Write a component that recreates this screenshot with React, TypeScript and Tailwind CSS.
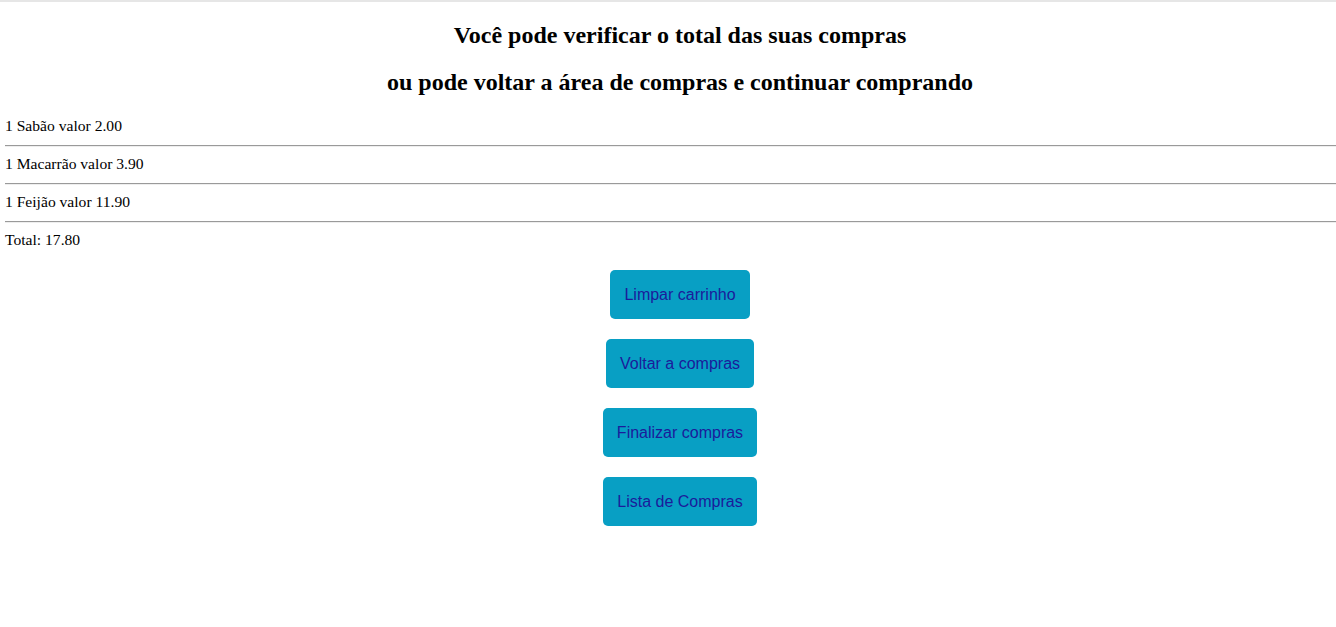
import React from "react";

const items = ["1 Sabão valor 2.00", "1 Macarrão valor 3.90", "1 Feijão valor 11.90"];
const buttons = ["Limpar carrinho", "Voltar a compras", "Finalizar compras", "Lista de Compras"];

export default function App() {
  return (
    <div className="min-h-[627px] bg-white text-black" style={{ fontFamily: '"Liberation Serif", serif' }}>
      <div className="h-[2px] border-t-2 border-[#e6e6e6]" />
      <div className="pl-[24px]">
        <h2 className="mt-[19px] text-center text-[24px] font-bold leading-[28px]">Você pode verificar o total das suas compras</h2>
        <h2 className="mt-[19px] text-center text-[24px] font-bold leading-[28px]">ou pode voltar a área de compras e continuar comprando</h2>
      </div>
      <div className="mt-[21px] pl-[5px]">
        {items.map((t) => (
          <div key={t}>
            <div className="h-[18px] text-[15.6px] leading-[18px]">{t}</div>
            <div className="mt-[10px] mb-[8px] h-[2px] border-t border-b border-t-[#9a9a9a] border-b-[#eeeeee]" />
          </div>
        ))}
        <div className="h-[18px] text-[15.6px] leading-[18px]">Total: 17.80</div>
      </div>
      <div className="mt-[21px] flex flex-col items-center gap-[20px] pl-[24px]">
        {buttons.map((b) => (
          <button
            key={b}
            className="h-[49px] rounded-[5px] bg-[#089fc4] px-[14px] text-[16px] text-[#1b1b9b]"
            style={{ fontFamily: '"Liberation Sans", Arial, sans-serif' }}
          >
            {b}
          </button>
        ))}
      </div>
    </div>
  );
}
